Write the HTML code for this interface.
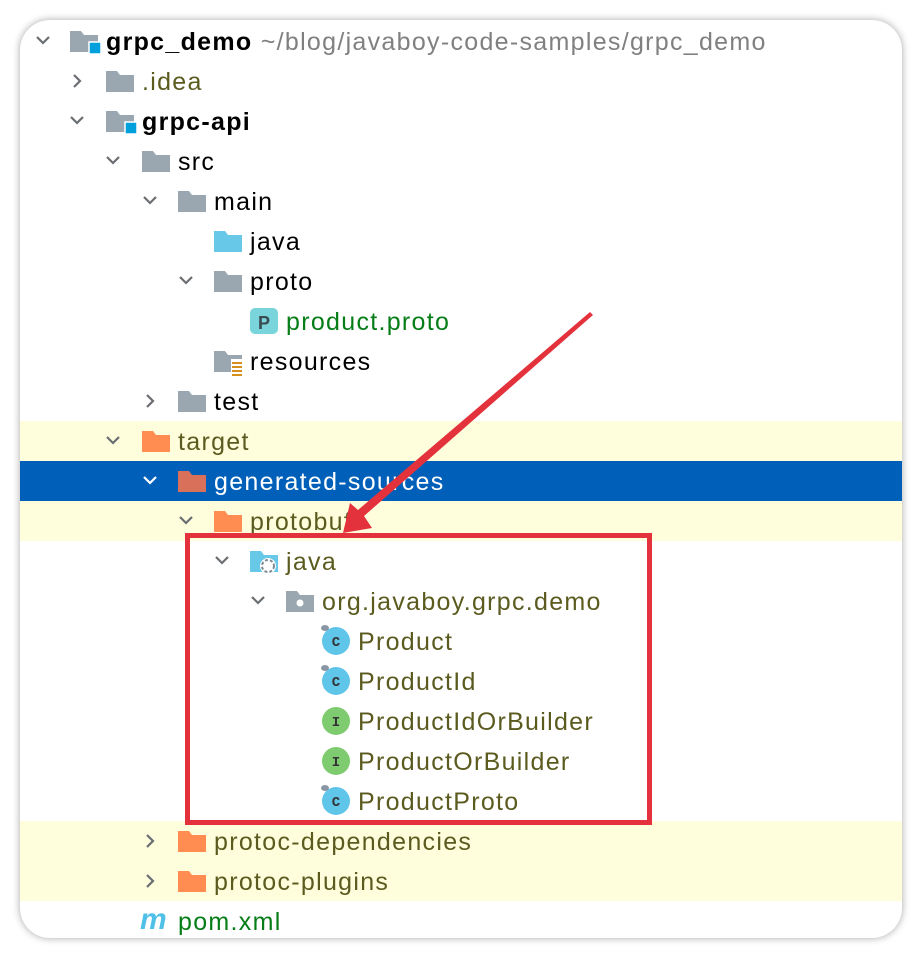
<!DOCTYPE html>
<html><head><style>
body{margin:0;width:920px;height:956px;background:#fff;position:relative;overflow:hidden;font-family:"Liberation Sans",Arial,sans-serif;}
.card{position:absolute;left:20px;top:20px;width:882px;height:918px;border-radius:30px;background:#fff;box-shadow:0 0 8px rgba(0,0,0,.35);overflow:hidden;}
.hl{position:absolute;left:0;width:882px;height:40px;background:#fefedc;}
.sel{background:#0060b9;}
.r{position:absolute;height:40px;line-height:42px;font-size:25px;letter-spacing:1.3px;white-space:nowrap;color:#000;}
.ol{color:#5b5b20}.gr{color:#067d17}
</style></head><body>
<div class="card">
<div class="hl" style="top:401px"></div>
<div class="hl sel" style="top:441px"></div>
<div class="hl" style="top:481px"></div>
<div class="hl" style="top:801px"></div>
<div class="hl" style="top:841px"></div>
</div>
<svg width="920" height="956" style="position:absolute;left:0;top:0">
<defs>
<g id="fold"><path d="M0 0h11l3 4h14v17H0z"/></g>
</defs>
<g fill="none" stroke="#6a6d72" stroke-width="2.2">
<path d="M37 37l6 6 6-6"/>
<path d="M74 75l6 6-6 6"/>
<path d="M71 117l6 6 6-6"/>
<path d="M107 157l6 6 6-6"/>
<path d="M144 197l6 6 6-6"/>
<path d="M180 277l6 6 6-6"/>
<path d="M147 395l6 6-6 6"/>
<path d="M107 437l6 6 6-6"/>
<path d="M180 517l6 6 6-6"/>
<path d="M216 557l6 6 6-6"/>
<path d="M252 597l6 6 6-6"/>
<path d="M147 835l6 6-6 6"/>
<path d="M147 875l6 6-6 6"/>
</g>
<path d="M144 477l6 6 6-6" fill="none" stroke="#fff" stroke-width="2.2"/>
<g fill="#9aa7b0">
<use href="#fold" x="70" y="31"/><use href="#fold" x="106" y="71"/><use href="#fold" x="106" y="111"/>
<use href="#fold" x="142" y="151"/><use href="#fold" x="178" y="191"/><use href="#fold" x="214" y="271"/>
<use href="#fold" x="214" y="351"/><use href="#fold" x="178" y="391"/><use href="#fold" x="286" y="591"/>
</g>
<rect x="89" y="42" width="12" height="12" fill="#00a0dc" stroke="#fff" stroke-width="1.5"/>
<rect x="125" y="122" width="12" height="12" fill="#00a0dc" stroke="#fff" stroke-width="1.5"/>
<circle cx="300" cy="603" r="3.5" fill="#fff"/>
<use href="#fold" x="214" y="231" fill="#67c8e8"/>
<use href="#fold" x="250" y="551" fill="#67c8e8"/>
<circle cx="268" cy="566" r="8" fill="#fff"/><circle cx="268" cy="566" r="6" fill="none" stroke="#7b8a96" stroke-width="2" stroke-dasharray="3 2"/>
<g fill="#ff8c50"><use href="#fold" x="142" y="431"/><use href="#fold" x="214" y="511"/><use href="#fold" x="178" y="831"/><use href="#fold" x="178" y="871"/></g>
<use href="#fold" x="178" y="471" fill="#d9705a"/>
<rect x="231" y="359" width="12" height="16" fill="#fff"/>
<g stroke="#d8901c" stroke-width="2"><path d="M232 363h10M232 367h10M232 371h10M232 375h10"/></g>
<rect x="250" y="308" width="28" height="26" rx="5" fill="#79d4dc"/>
<text x="264" y="329" font-size="18" font-weight="bold" fill="#3a4a50" text-anchor="middle" font-family="Liberation Sans">P</text>
<g font-family="Liberation Mono" font-size="14" font-weight="bold" text-anchor="middle" fill="#333">
<circle cx="336" cy="641" r="14" fill="#5fc5e9"/><text x="336" y="646">C</text>
<circle cx="336" cy="681" r="14" fill="#5fc5e9"/><text x="336" y="686">C</text>
<circle cx="336" cy="721" r="14" fill="#7ecb70"/><text x="336" y="726">I</text>
<circle cx="336" cy="761" r="14" fill="#7ecb70"/><text x="336" y="766">I</text>
<circle cx="336" cy="801" r="14" fill="#5fc5e9"/><text x="336" y="806">C</text>
</g>
<g fill="#8a97a3"><ellipse cx="325" cy="628" rx="4" ry="3"/><ellipse cx="325" cy="668" rx="4" ry="3"/><ellipse cx="325" cy="788" rx="4" ry="3"/></g>
<text x="140" y="929" font-size="30" font-weight="bold" font-style="italic" fill="#4fc1e9" font-family="Liberation Sans">m</text>
</svg>
<div class="r" style="left:106px;top:21px"><b>grpc_demo</b> <span style="color:#808080">~/blog/javaboy-code-samples/grpc_demo</span></div>
<div class="r ol" style="left:142px;top:61px">.idea</div>
<div class="r" style="left:142px;top:101px"><b>grpc-api</b></div>
<div class="r" style="left:178px;top:141px">src</div>
<div class="r" style="left:214px;top:181px">main</div>
<div class="r" style="left:250px;top:221px">java</div>
<div class="r" style="left:250px;top:261px">proto</div>
<div class="r gr" style="left:286px;top:301px">product.proto</div>
<div class="r" style="left:250px;top:341px">resources</div>
<div class="r" style="left:214px;top:381px">test</div>
<div class="r ol" style="left:178px;top:421px">target</div>
<div class="r" style="left:214px;top:461px;color:#fff">generated-sources</div>
<div class="r ol" style="left:250px;top:501px">protobuf</div>
<div class="r ol" style="left:286px;top:541px">java</div>
<div class="r ol" style="left:322px;top:581px">org.javaboy.grpc.demo</div>
<div class="r ol" style="left:358px;top:621px">Product</div>
<div class="r ol" style="left:358px;top:661px">ProductId</div>
<div class="r ol" style="left:358px;top:701px">ProductIdOrBuilder</div>
<div class="r ol" style="left:358px;top:741px">ProductOrBuilder</div>
<div class="r ol" style="left:358px;top:781px">ProductProto</div>
<div class="r ol" style="left:214px;top:821px">protoc-dependencies</div>
<div class="r ol" style="left:214px;top:861px">protoc-plugins</div>
<div class="r gr" style="left:178px;top:901px">pom.xml</div>
<svg width="920" height="956" style="position:absolute;left:0;top:0;pointer-events:none">
<rect x="187.5" y="535.5" width="462" height="287" fill="none" stroke="#e3323c" stroke-width="5"/>
<path d="M590 312 L593 315 L364 516 L372 528 L343 533 L350 503 L358 510 Z" fill="#e3323c"/>
</svg>
</body></html>
